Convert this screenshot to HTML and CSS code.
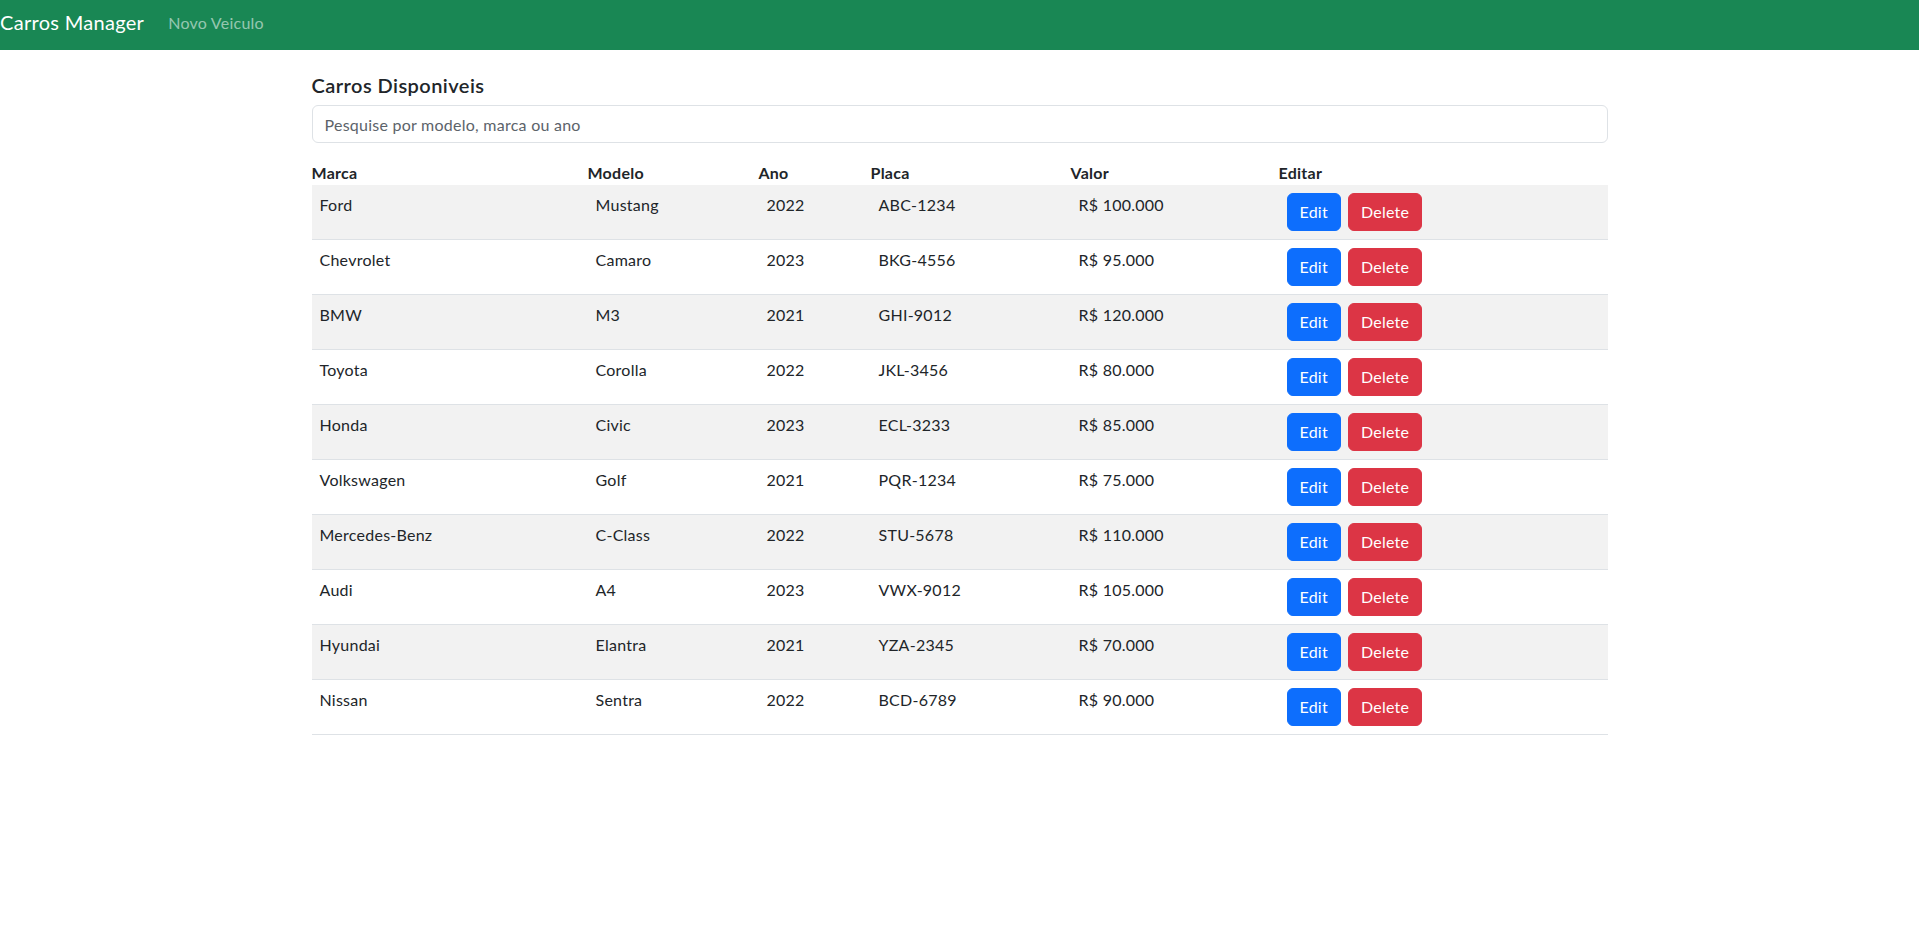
FILE: index.html
```html
<!DOCTYPE html>
<html lang="pt">
<head>
<meta charset="utf-8">
<title>Carros Manager</title>
<link rel="stylesheet" href="styles.css">
</head>
<body>
<nav class="navbar">
  <a class="brand" href="#">Carros Manager</a>
  <a class="nav-link" href="#">Novo Veiculo</a>
</nav>
<main class="container">
  <h5 class="title">Carros Disponiveis</h5>
  <input class="search" type="text" placeholder="Pesquise por modelo, marca ou ano">
  <table class="cars">
    <colgroup>
      <col class="c-marca"><col class="c-modelo"><col class="c-ano"><col class="c-placa"><col class="c-valor"><col class="c-editar">
    </colgroup>
    <thead>
      <tr><th>Marca</th><th>Modelo</th><th>Ano</th><th>Placa</th><th>Valor</th><th>Editar</th></tr>
    </thead>
    <tbody>
      <tr><td>Ford</td><td>Mustang</td><td>2022</td><td>ABC-1234</td><td>R$ 100.000</td><td><div class="actions"><button class="btn btn-edit">Edit</button><button class="btn btn-delete">Delete</button></div></td></tr>
      <tr><td>Chevrolet</td><td>Camaro</td><td>2023</td><td>BKG-4556</td><td>R$ 95.000</td><td><div class="actions"><button class="btn btn-edit">Edit</button><button class="btn btn-delete">Delete</button></div></td></tr>
      <tr><td>BMW</td><td>M3</td><td>2021</td><td>GHI-9012</td><td>R$ 120.000</td><td><div class="actions"><button class="btn btn-edit">Edit</button><button class="btn btn-delete">Delete</button></div></td></tr>
      <tr><td>Toyota</td><td>Corolla</td><td>2022</td><td>JKL-3456</td><td>R$ 80.000</td><td><div class="actions"><button class="btn btn-edit">Edit</button><button class="btn btn-delete">Delete</button></div></td></tr>
      <tr><td>Honda</td><td>Civic</td><td>2023</td><td>ECL-3233</td><td>R$ 85.000</td><td><div class="actions"><button class="btn btn-edit">Edit</button><button class="btn btn-delete">Delete</button></div></td></tr>
      <tr><td>Volkswagen</td><td>Golf</td><td>2021</td><td>PQR-1234</td><td>R$ 75.000</td><td><div class="actions"><button class="btn btn-edit">Edit</button><button class="btn btn-delete">Delete</button></div></td></tr>
      <tr><td>Mercedes-Benz</td><td>C-Class</td><td>2022</td><td>STU-5678</td><td>R$ 110.000</td><td><div class="actions"><button class="btn btn-edit">Edit</button><button class="btn btn-delete">Delete</button></div></td></tr>
      <tr><td>Audi</td><td>A4</td><td>2023</td><td>VWX-9012</td><td>R$ 105.000</td><td><div class="actions"><button class="btn btn-edit">Edit</button><button class="btn btn-delete">Delete</button></div></td></tr>
      <tr><td>Hyundai</td><td>Elantra</td><td>2021</td><td>YZA-2345</td><td>R$ 70.000</td><td><div class="actions"><button class="btn btn-edit">Edit</button><button class="btn btn-delete">Delete</button></div></td></tr>
      <tr><td>Nissan</td><td>Sentra</td><td>2022</td><td>BCD-6789</td><td>R$ 90.000</td><td><div class="actions"><button class="btn btn-edit">Edit</button><button class="btn btn-delete">Delete</button></div></td></tr>
    </tbody>
  </table>
</main>
</body>
</html>
```
FILE: styles.css
```css
* { box-sizing: border-box; }
html, body {
  margin: 0;
  padding: 0;
}
body {
  font-family: Lato, "Liberation Sans", sans-serif;
  font-size: 16px;
  line-height: 1.5;
  letter-spacing: 0.25px;
  color: #212529;
  background: #fff;
}
.navbar {
  height: 50px;
  background: #198754;
  display: flex;
  align-items: center;
  padding: 0 0 7px;
}
.brand {
  color: #fff;
  text-decoration: none;
  font-size: 20px;
  line-height: 30px;
  letter-spacing: 0.3px;
  margin-right: 16px;
  margin-left: 0;
}
.nav-link {
  color: rgba(255, 255, 255, 0.55);
  text-decoration: none;
  font-size: 16px;
  padding: 8px;
  line-height: 24px;
  margin-top: 2px;
}
.container {
  width: 1320px;
  margin: 0 auto;
  padding: 23px 12px 0;
}
.title {
  font-size: 20px;
  font-weight: 600;
  line-height: 24px;
  letter-spacing: 0.45px;
  margin: 0 0 8px;
}
.search {
  display: block;
  width: 100%;
  height: 38px;
  padding: 6px 12px;
  font-family: inherit;
  font-size: 16px;
  letter-spacing: 0.25px;
  color: #212529;
  border: 1px solid #dee2e6;
  border-radius: 6px;
  outline: none;
}
.search::placeholder { color: #5c636a; }
.cars {
  width: 100%;
  margin-top: 18px;
  border-collapse: collapse;
  table-layout: fixed;
}
.c-marca { width: 276px; }
.c-modelo { width: 171px; }
.c-ano { width: 112px; }
.c-placa { width: 200px; }
.c-valor { width: 208px; }
.c-editar { width: 329px; }
.cars th {
  text-align: left;
  font-weight: 700;
  padding: 0;
  line-height: 24px;
}
.cars td {
  padding: 8px;
  vertical-align: top;
  border-bottom: 1px solid #dee2e6;
  line-height: 24px;
}
.cars tbody tr:nth-child(odd) td { background: #f2f2f2; }
.actions {
  display: flex;
  gap: 7px;
}
.btn {
  font-family: inherit;
  font-size: 16px;
  letter-spacing: 0.25px;
  line-height: 24px;
  height: 38px;
  padding: 6px 12px;
  border: 1px solid transparent;
  border-radius: 6px;
  color: #fff;
  cursor: pointer;
}
.btn-edit { background: #0d6efd; border-color: #0d6efd; }
.btn-delete { background: #dc3545; border-color: #dc3545; }
```
